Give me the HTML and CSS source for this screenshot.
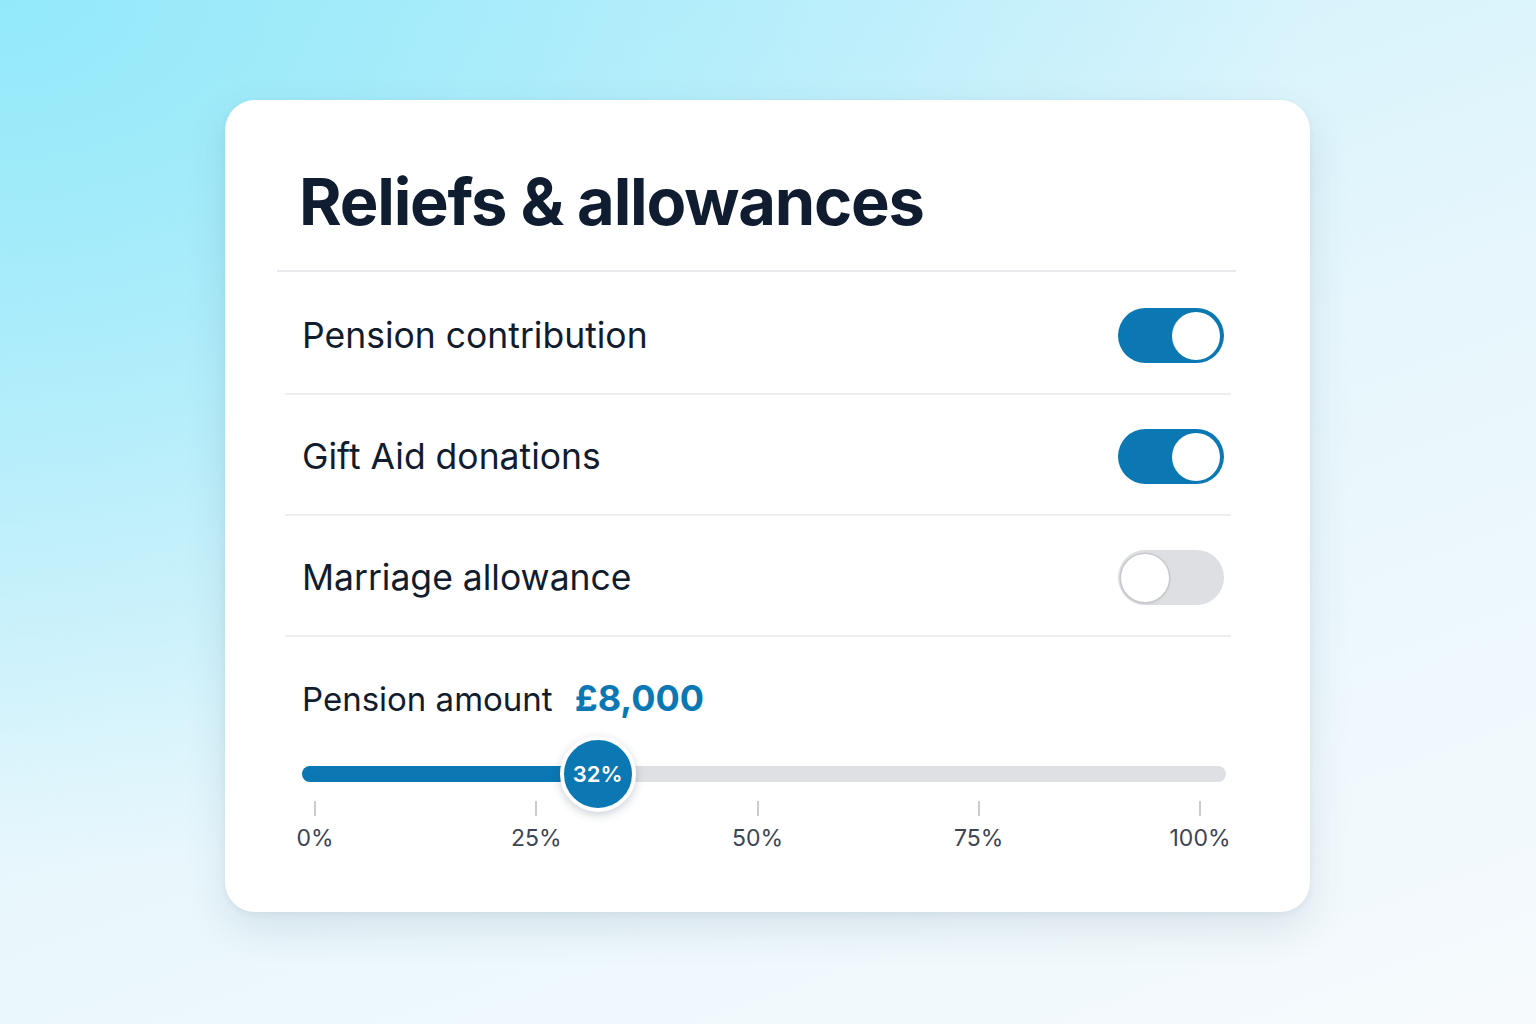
FILE: index.html
```html
<!DOCTYPE html>
<html lang="en">
<head>
    <meta charset="UTF-8">
    <meta name="viewport" content="width=device-width, initial-scale=1.0">
    <title>Reliefs &amp; allowances</title>
    <link rel="stylesheet" href="styles.css">
</head>
<body>
    <div class="card">
        <h1 class="card-title">Reliefs &amp; allowances</h1>

        <div class="rows">
            <div class="row">
                <span class="row-label">Pension contribution</span>
                <span class="toggle on"><span class="knob"></span></span>
            </div>
            <div class="row">
                <span class="row-label">Gift Aid donations</span>
                <span class="toggle on"><span class="knob"></span></span>
            </div>
            <div class="row">
                <span class="row-label">Marriage allowance</span>
                <span class="toggle"><span class="knob"></span></span>
            </div>
        </div>

        <div class="amount">
            <div class="amount-head">
                <span class="amount-label">Pension amount</span>
                <span class="amount-value">£8,000</span>
            </div>

            <div class="slider">
                <div class="track">
                    <div class="fill" style="width: 32%"></div>
                    <div class="thumb" style="left: 32%">32%</div>
                </div>
            </div>

            <div class="scale">
                <div class="mark"><span class="tick"></span><span>0%</span></div>
                <div class="mark"><span class="tick"></span><span>25%</span></div>
                <div class="mark"><span class="tick"></span><span>50%</span></div>
                <div class="mark"><span class="tick"></span><span>75%</span></div>
                <div class="mark"><span class="tick"></span><span>100%</span></div>
            </div>
        </div>
    </div>
</body>
</html>
```

FILE: styles.css
```css
html, body {
    height: 100%;
}
body {
    margin: 0;
    font-family: Inter, "Noto Sans", sans-serif;
    color: #0f1b2d;
    background:
        radial-gradient(ellipse at 0% 0%, #93e9fa 0%, rgba(147, 233, 250, 0) 60%),
        linear-gradient(160deg, #c4effb 0%, #e6f6fc 50%, #f6fafd 100%);
    padding: 100px 0 0 225px;
    box-sizing: border-box;
}
.card {
    width: 1085px;
    height: 812px;
    box-sizing: border-box;
    background: #fff;
    border-radius: 30px;
    box-shadow: 0 16px 40px rgba(40, 70, 100, 0.12), 0 2px 6px rgba(40, 70, 100, 0.06);
    padding: 62px 74px 0 52px;
}
.card-title {
    margin: 0;
    padding: 0 0 28px 22px;
    font-size: 65px;
    font-weight: 700;
    letter-spacing: -1.2px;
    line-height: 80px;
    color: #101d30;
    border-bottom: 2px solid #e7e9ec;
}
.rows {
    margin: 2px 5px 0 8px;
}
.row {
    display: flex;
    align-items: center;
    justify-content: space-between;
    height: 115px;
    padding: 4px 7px 0 17px;
    border-bottom: 2px solid #eceef0;
}
.row-label {
    font-size: 35.5px;
    color: #111c2e;
}
.toggle {
    position: relative;
    width: 106px;
    height: 55px;
    border-radius: 28px;
    background: #dedfe2;
    box-sizing: border-box;
}
.toggle.on {
    background: #0b78b3;
}
.knob {
    position: absolute;
    top: 4px;
    left: 3px;
    width: 48px;
    height: 48px;
    border-radius: 50%;
    background: #fff;
    box-shadow: 0 0 0 1.5px #c6c8cc, 0 2px 3px rgba(0, 0, 0, 0.1);
}
.toggle.on .knob {
    left: auto;
    right: 4px;
    top: 3.5px;
    box-shadow: none;
}
.amount {
    padding: 39px 0 0 25px;
}
.amount-head {
    display: flex;
    align-items: baseline;
    gap: 22px;
}
.amount-label {
    font-size: 33px;
    color: #111c2e;
}
.amount-value {
    font-size: 36px;
    font-weight: 700;
    color: #0b78b3;
}
.slider {
    margin: 46px 10px 0 0;
}
.track {
    position: relative;
    height: 16px;
    border-radius: 8px;
    background: #dfe0e3;
}
.fill {
    height: 100%;
    border-radius: 8px 0 0 8px;
    background: #0b78b3;
}
.thumb {
    position: absolute;
    top: 50%;
    width: 68px;
    height: 68px;
    transform: translate(-50%, -50%);
    border-radius: 50%;
    background: #0b78b3;
    border: 4px solid #fff;
    box-shadow: 0 3px 10px rgba(20, 50, 80, 0.22);
    color: #fff;
    font-size: 22px;
    font-weight: 600;
    display: flex;
    align-items: center;
    justify-content: center;
}
.scale {
    display: flex;
    justify-content: space-between;
    margin: 19px 6px 0 -17px;
}
.mark {
    width: 60px;
    display: flex;
    flex-direction: column;
    align-items: center;
    gap: 8px;
    font-size: 23px;
    color: #3b4556;
}
.tick {
    width: 2px;
    height: 15px;
    background: #c9ccd1;
}
```
